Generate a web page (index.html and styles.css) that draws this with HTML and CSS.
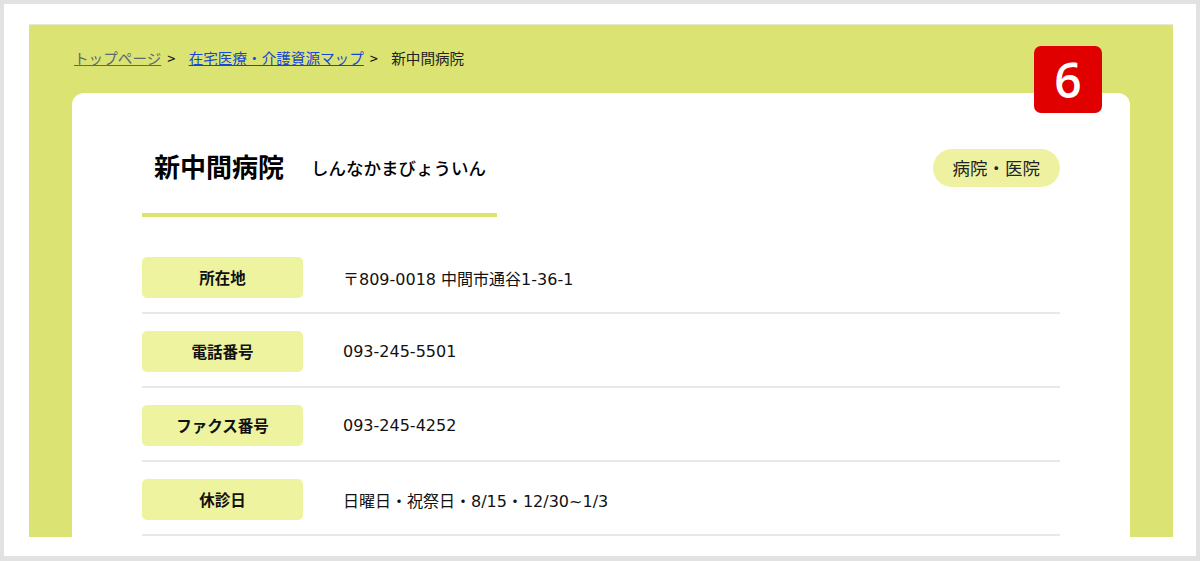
FILE: index.html
```html
<!DOCTYPE html>
<html lang="ja">
<head>
<meta charset="UTF-8" />
<meta name="viewport" content="width=device-width, initial-scale=1" />
<title>新中間病院｜在宅医療・介護資源マップ</title>
<link rel="stylesheet" href="styles.css">
</head>
<body>

<div class="frame">
  <div class="page">

    <nav class="crumbs">
      <a href="#" class="visited">トップページ</a><span class="sep">&gt;</span>
      <a href="#">在宅医療・介護資源マップ</a><span class="sep">&gt;</span>
      <span>新中間病院</span>
    </nav>

    <div class="num">6</div>

    <div class="card">
      <div class="head">
        <h1 class="name">新中間病院<span class="kana">しんなかまびょういん</span></h1>
        <div class="kind">病院・医院</div>
      </div>

      <dl class="info">
        <div class="row">
          <dt>所在地</dt>
          <dd>〒809-0018 中間市通谷1-36-1</dd>
        </div>
        <div class="row">
          <dt>電話番号</dt>
          <dd>093-245-5501</dd>
        </div>
        <div class="row">
          <dt>ファクス番号</dt>
          <dd>093-245-4252</dd>
        </div>
        <div class="row">
          <dt>休診日</dt>
          <dd>日曜日・祝祭日・8/15・12/30~1/3</dd>
        </div>
      </dl>
    </div>

  </div>
</div>

</body>
</html>
```

FILE: styles.css
```css
body {
  margin: 0;
  background: #fff;
  font-family: "Noto Sans CJK JP", "Noto Sans", sans-serif;
  color: #111;
}

.frame {
  box-sizing: border-box;
  height: 561px;
  border: 4px solid #e2e2e2;
  border-bottom-width: 5px;
  padding: 20px 23px 20px 25px;
  background: #fff;
  overflow: hidden;
}

.page {
  position: relative;
  height: 100%;
  background: #dbe373;
  border-top: 1px solid #e6ead0;
  padding: 0 43px;
  overflow: hidden;
}

/* パンくず */
.crumbs {
  padding: 22px 0 0 2px;
  height: 68px;
  box-sizing: border-box;
  font-size: 14.6px;
  line-height: 22px;
  color: #222;
}
.crumbs a {
  color: #1747d6;
  text-decoration: underline;
}
.crumbs a.visited {
  color: #5a6a70;
}
.crumbs .sep {
  margin: 0 10px 0 6px;
  color: #111;
}

/* 番号バッジ */
.num {
  position: absolute;
  top: 21px;
  right: 71px;
  width: 68px;
  height: 67px;
  border-radius: 7px;
  background: #e00000;
  color: #fff;
  font-family: "Open Sans", sans-serif;
  font-weight: 600;
  font-size: 48px;
  line-height: 67px;
  text-align: center;
}

.card {
  background: #fff;
  border-radius: 12px;
  padding: 50px 70px 20px;
  min-height: 500px;
}

.head {
  display: flex;
  justify-content: space-between;
  align-items: flex-start;
}

.name {
  margin: 0;
  width: 355px;
  box-sizing: border-box;
  padding: 0 0 22px 12px;
  border-bottom: 4px solid #dde46e;
  font-size: 26px;
  font-weight: bold;
  line-height: 46px;
  color: #000;
}
.kana {
  margin-left: 27px;
  font-size: 17.5px;
  font-weight: 500;
  vertical-align: 2px;
}

.kind {
  margin-top: 6px;
  padding: 0 20px;
  height: 38px;
  line-height: 38px;
  border-radius: 19px;
  background: #eef2a0;
  font-size: 17.5px;
  color: #222;
}

/* 基本情報 */
.info {
  margin: 23px 0 0;
}
.row {
  display: flex;
  align-items: center;
  padding: 17px 0 14px;
  border-bottom: 2px solid #e8e8e8;
}
.row dt {
  width: 161px;
  height: 41px;
  line-height: 41px;
  border-radius: 5px;
  background: #eef3a0;
  text-align: center;
  font-size: 15.5px;
  font-weight: bold;
  color: #111;
}
.row dd {
  margin: 0 0 0 40px;
  font-family: "DejaVu Sans", "Noto Sans CJK JP", sans-serif;
  font-size: 16px;
  color: #111;
}
```
